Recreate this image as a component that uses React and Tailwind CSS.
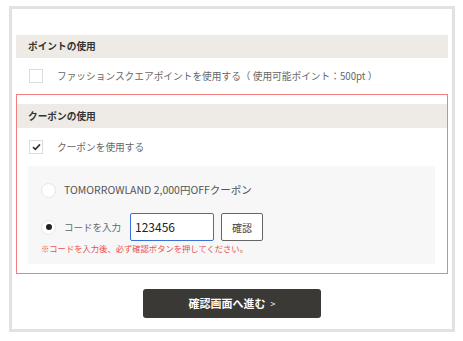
import React from "react";

const font = { fontFamily: '"Noto Sans CJK JP", "Noto Sans", sans-serif' };

function Checkbox({ checked }) {
  return (
    <div className="w-[14px] h-[14px] border border-[#dcdcdc] bg-white flex items-center justify-center shrink-0">
      {checked && (
        <svg width="9" height="8" viewBox="0 0 9 8">
          <path d="M1 4.2 L3.4 6.4 L8 1.4" fill="none" stroke="#333" strokeWidth="1.6" />
        </svg>
      )}
    </div>
  );
}

function Radio({ checked }) {
  return (
    <div className="w-[15px] h-[15px] rounded-full border border-[#e6e6e6] bg-white flex items-center justify-center shrink-0">
      {checked && <div className="w-[6px] h-[6px] rounded-full bg-[#222]" />}
    </div>
  );
}

export default function App() {
  return (
    <div className="w-[463px] h-[341px] bg-white pt-[6px] pl-[9px]" style={font}>
      <div className="w-[446px] h-[326px] border-[3px] border-[#e2e2e2] px-[4px] pt-[26px]">
        {/* ポイント */}
        <div className="h-[23px] bg-[#eeebe6] pl-[12px] flex items-center text-[9.7px] font-bold text-[#333]">
          ポイントの使用
        </div>
        <div className="h-[36px] flex items-center pl-[13px] gap-[14px]">
          <Checkbox />
          <span className="text-[9.7px] text-[#666]">
            ファッションスクエアポイントを使用する（ 使用可能ポイント：500pt ）
          </span>
        </div>

        {/* クーポン */}
        <div className="border border-[#f47f7f] pt-[9px] pb-[9px]">
          <div className="h-[24px] bg-[#eeebe6] pl-[11px] flex items-center text-[9.7px] font-bold text-[#333]">
            クーポンの使用
          </div>
          <div className="h-[38px] flex items-center pl-[12px] gap-[14px]">
            <Checkbox checked />
            <span className="text-[9.7px] text-[#666]">クーポンを使用する</span>
          </div>
          <div className="ml-[11px] mr-[12px] bg-[#f7f7f7] pt-[14px] pb-[10px] pl-[13px]">
            <div className="h-[20px] flex items-center gap-[8px]">
              <Radio />
              <span className="text-[10.5px] text-[#555]">TOMORROWLAND 2,000円OFFクーポン</span>
            </div>
            <div className="mt-[13px] h-[28px] flex items-center">
              <Radio checked />
              <span className="ml-[8px] text-[9.5px] text-[#666]">コードを入力</span>
              <div className="ml-[9px] w-[84px] h-[28px] border-[1.5px] border-[#3d6fd8] rounded-[2px] bg-white flex items-center pl-[4px] text-[12px] text-[#222]">
                123456
              </div>
              <div className="ml-[7px] w-[42px] h-[28px] border border-[#666] rounded-[2px] bg-white flex items-center justify-center text-[10px] text-[#444]">
                確認
              </div>
            </div>
            <div className="mt-[1px] h-[12px] flex items-center text-[8.3px] text-[#ec4f4f]">
              ※コードを入力後、必ず確認ボタンを押してください。
            </div>
          </div>
        </div>

        <div className="mt-[15px] flex justify-center">
          <div className="w-[178px] h-[29px] bg-[#3a3936] rounded-[3px] flex items-center justify-center text-white text-[11px] font-bold">
            確認画面へ進む<span className="ml-[5px] text-[9px] font-normal">&gt;</span>
          </div>
        </div>
      </div>
    </div>
  );
}
